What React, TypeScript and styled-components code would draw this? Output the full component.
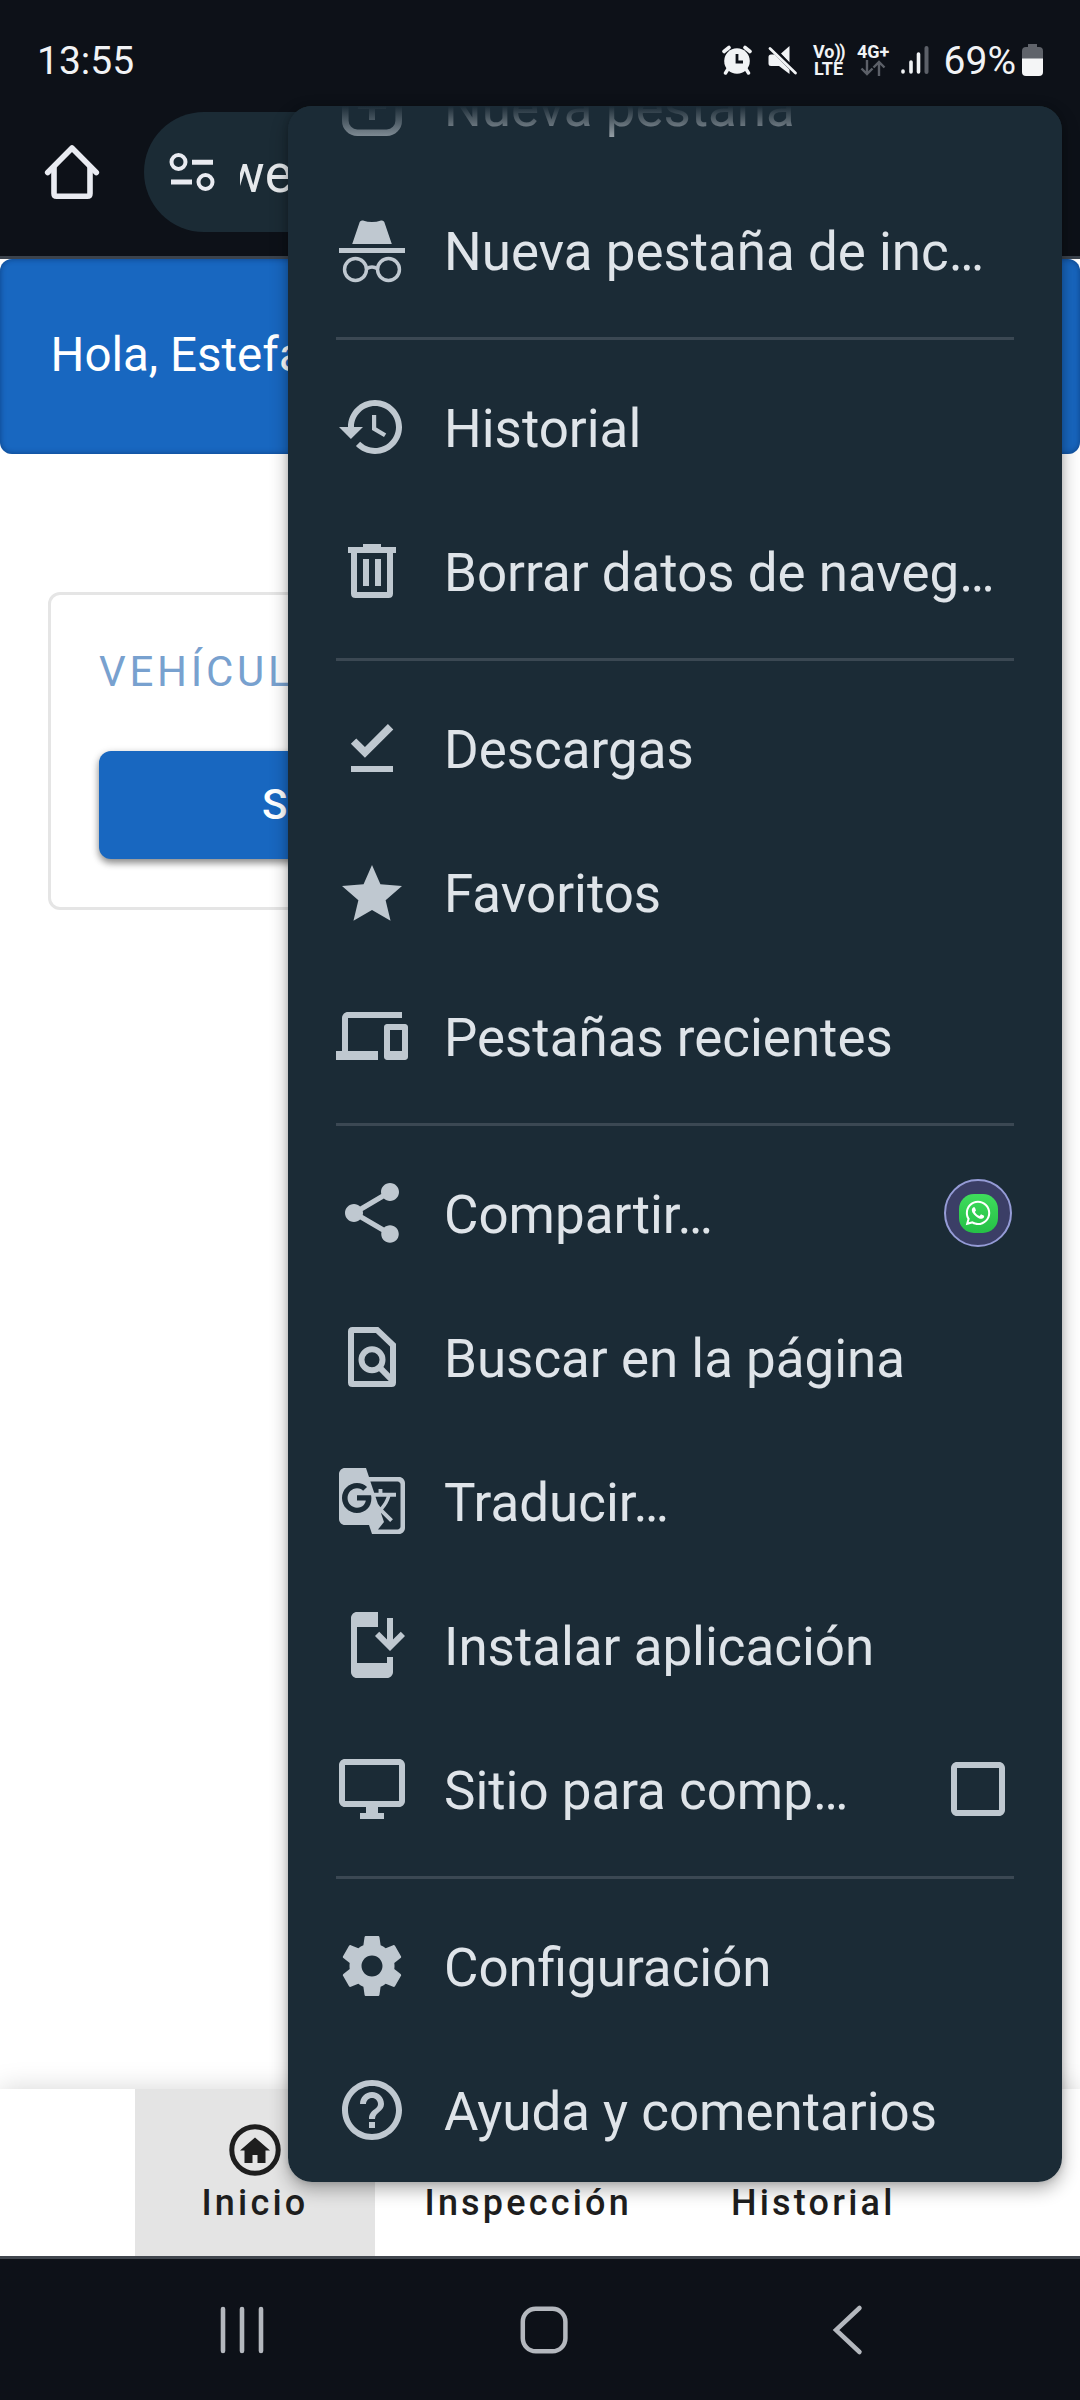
import React from "react";
import styled, { createGlobalStyle } from "styled-components";
import { MdGTranslate, MdInstallMobile, MdHelpOutline, MdCheckBoxOutlineBlank } from "react-icons/md";
import { FaWhatsapp } from "react-icons/fa";

const GlobalStyle = createGlobalStyle`
  *, *::before, *::after { box-sizing: border-box; }
  body { margin: 0; background: #fff; font-family: Roboto, "Noto Sans", sans-serif; }
  svg { display: block; flex: none; }
`;

const Screen = styled.div`
  position: relative;
  display: flex;
  flex-direction: column;
  width: 1080px;
  height: 2400px;
  overflow: hidden;
  background: #fff;
`;

/* ---------- status bar ---------- */
const StatusBar = styled.header`
  display: flex;
  align-items: center;
  justify-content: space-between;
  height: 104px;
  padding: 16px 37px 0 37px;
  background: #0d1118;
  color: #f1f3f5;
`;
const StatusText = styled.span<{ $gap?: number }>`
  font-size: 39px;
  line-height: 46px;
  margin-left: ${(p) => p.$gap ?? 0}px;
  padding-top: 1px;
`;
const StatusIcons = styled.div`
  display: flex;
  align-items: center;
`;
const StatusIcon = styled.span<{ $gap: number }>`
  display: flex;
  margin-left: ${(p) => p.$gap}px;
`;
const Badge = styled.span<{ $w: number; $gap: number }>`
  display: flex;
  flex-direction: column;
  align-items: center;
  width: ${(p) => p.$w}px;
  margin-left: ${(p) => p.$gap}px;
  height: 34px;
  font-size: 18px;
  font-weight: 700;
  line-height: 17px;
  white-space: nowrap;
`;
const Waves = styled.span`
  letter-spacing: -1.5px;
`;

/* ---------- browser toolbar ---------- */
const Toolbar = styled.div`
  display: flex;
  align-items: center;
  height: 155px;
  padding: 8px 144px 24px 36px;
  background: #0d1118;
  border-bottom: 3px solid #3b434d;
`;
const AddressBar = styled.div`
  display: flex;
  align-items: center;
  flex: 1;
  height: 120px;
  margin-left: 36px;
  padding-left: 24px;
  border-radius: 60px;
  background: #1b2b35;
`;
const Address = styled.div`
  width: 60px;
  margin-left: 24px;
  overflow: hidden;
  color: #e6e9ec;
  font-size: 52.8px;
  line-height: 64px;
  padding-top: 4px;
  text-indent: -15px;
`;

/* ---------- web page ---------- */
const Page = styled.main`
  display: flex;
  flex-direction: column;
  flex: 1;
`;
const Greeting = styled.div`
  display: flex;
  align-items: center;
  height: 195px;
  padding: 0 0 3px 50.5px;
  border-radius: 12px;
  background: #1867c0;
  box-shadow: inset 0 0 5px 1px rgba(6, 40, 90, 0.45);
  color: #fff;
  font-size: 47.5px;
`;
const Card = styled.section`
  display: flex;
  flex-direction: column;
  height: 318px;
  margin: 138px 48px 0;
  padding: 52px 48px 0;
  border: 3px solid #e5e5e5;
  border-radius: 12px;
`;
const Overline = styled.div`
  color: #78a1cf;
  font-size: 42px;
  line-height: 50px;
  letter-spacing: 3.75px;
`;
const PrimaryButton = styled.button`
  height: 108px;
  margin-top: 54px;
  padding: 0 0 2px 163px;
  border: 0;
  border-radius: 12px;
  background: #1867c0;
  box-shadow: 0 4px 7px rgba(0, 0, 0, 0.4), 0 2px 10px rgba(0, 0, 0, 0.12);
  color: #fff;
  font: 500 42px Roboto, sans-serif;
  text-align: left;
`;
const Spacer = styled.div`
  flex: 1;
`;
const Tabs = styled.nav`
  display: flex;
  justify-content: center;
  height: 167px;
  background: #fff;
  box-shadow: 0 0 26px rgba(0, 0, 0, 0.17);
`;
const Tab = styled.div<{ $active?: boolean }>`
  display: flex;
  flex-direction: column;
  align-items: center;
  justify-content: flex-end;
  min-width: 240px;
  padding: 0 49.5px 32px;
  background: ${(p) => (p.$active ? "#e4e4e4" : "transparent")};
  color: #1e1e1e;
  font-size: 36px;
  font-weight: 500;
  line-height: 42px;
  letter-spacing: 3.2px;
`;
const TabIcon = styled.span`
  margin-bottom: 6px;
`;

/* ---------- system navigation ---------- */
const SystemNav = styled.footer`
  display: flex;
  align-items: center;
  justify-content: space-between;
  height: 144px;
  padding: 0 203px 0 212px;
  border-top: 3px solid #41464e;
  background: #0d1118;
`;

/* ---------- overflow menu ---------- */
const Menu = styled.div`
  position: absolute;
  left: 288px;
  top: 106px;
  display: flex;
  flex-direction: column;
  justify-content: flex-end;
  width: 774px;
  height: 2076px;
  overflow: hidden;
  border-radius: 24px;
  background: #1b2b36;
  &::before {
    content: "";
    position: absolute;
    inset: 0 0 auto;
    height: 50px;
    background: linear-gradient(#1b2b36, rgba(27, 43, 54, 0));
  }
`;
const MenuShadow = styled.div`
  position: absolute;
  left: 288px;
  top: 106px;
  width: 774px;
  height: 2076px;
  border-radius: 24px;
  box-shadow: 0 7px 18px rgba(0, 0, 0, 0.32), 0 0 6px rgba(0, 0, 0, 0.15);
`;
const MenuRow = styled.div`
  display: flex;
  align-items: center;
  flex: none;
  height: 144px;
  padding: 0 48px;
  color: #bfc8d0;
`;
const MenuLabel = styled.span`
  flex: 1;
  margin-left: 36px;
  padding-top: 3px;
  color: #dfe4e9;
  font-size: 52.9px;
  line-height: 62px;
  white-space: nowrap;
`;
const Divider = styled.div`
  flex: none;
  height: 3px;
  margin: 15px 48px;
  background: #3b4853;
`;
const Trailing = styled.span`
  display: flex;
  align-items: center;
  justify-content: center;
  width: 72px;
`;
const ShareTarget = styled.span`
  display: flex;
  align-items: center;
  justify-content: center;
  width: 68px;
  height: 68px;
  border: 2px solid #959bd6;
  border-radius: 50%;
  background: #3b3e66;
`;
const AppTile = styled.span`
  display: flex;
  align-items: center;
  justify-content: center;
  width: 39px;
  height: 39px;
  border-radius: 15px;
  background: linear-gradient(#3fdc5c, #25c046);
  color: #fff;
`;

const Glyph = ({ d, children }: { d?: string; children?: React.ReactNode }) => (
  <svg width="72" height="72" viewBox="0 0 24 24" fill="currentColor">
    {d ? <path fillRule="evenodd" d={d} /> : children}
  </svg>
);

const paths = {
  history:
    "M13 3c-4.97 0-9 4.03-9 9H1l3.89 3.89.07.14L9 12H6c0-3.87 3.13-7 7-7s7 3.13 7 7-3.13 7-7 7c-1.93 0-3.68-.79-4.94-2.06l-1.42 1.42C8.27 19.99 10.51 21 13 21c4.97 0 9-4.03 9-9s-4.03-9-9-9zm-1 5v5l4 2.37.74-1.23L13.4 12.2V8H12z",
  trash:
    "M9 3h6v1h5v2h-1v13.5q0 1.5-1.5 1.5h-11Q5 21 5 19.5V6H4V4h5zM7 6v13h10V6zM9 8h2v9H9zM13 8h2v9h-2z",
  done: "M17.3 4L19.1 5.8 9.65 15.25 4.95 10.55 6.75 8.8 9.65 11.65zM5 18h14v2H5z",
  star: "M12 18.02L18.18 21.6l-1.64-6.88L22 9.99l-7.19-.61L12 3 9.19 9.38 2 9.99l5.46 4.73L5.82 21.6z",
  devices:
    "M4 6h18V4H4c-1.1 0-2 .9-2 2v11H0v3h14v-3H4V6zm19 2h-6c-.55 0-1 .45-1 1v10c0 .55.45 1 1 1h6c.55 0 1-.45 1-1V9c0-.55-.45-1-1-1zm-1 9h-4v-7h4v7z",
  share:
    "M18 16.08c-.76 0-1.44.3-1.96.77L8.91 12.7c.05-.23.09-.46.09-.7s-.04-.47-.09-.7l7.05-4.11c.54.5 1.25.81 2.04.81 1.66 0 3-1.34 3-3s-1.34-3-3-3-3 1.34-3 3c0 .24.04.47.09.7L8.04 9.81C7.5 9.31 6.79 9 6 9c-1.66 0-3 1.34-3 3s1.34 3 3 3c.79 0 1.5-.31 2.04-.81l7.12 4.16c-.05.21-.08.43-.08.65 0 1.61 1.31 2.92 2.92 2.92s2.92-1.31 2.92-2.92-1.31-2.92-2.92-2.92z",
  monitor:
    "M21 2H3c-1.1 0-2 .9-2 2v12c0 1.1.9 2 2 2h7v2H8v2h8v-2h-2v-2h7c1.1 0 2-.9 2-2V4c0-1.1-.9-2-2-2zm0 14H3V4h18v12z",
  gear:
    "M19.43 12.98c.04-.32.07-.64.07-.98s-.03-.66-.07-.98l2.11-1.65c.19-.15.24-.42.12-.64l-2-3.46c-.12-.22-.39-.3-.61-.22l-2.49 1c-.52-.4-1.08-.73-1.69-.98l-.38-2.65C14.46 2.18 14.25 2 14 2h-4c-.25 0-.46.18-.49.42l-.38 2.65c-.61.25-1.17.59-1.69.98l-2.49-1c-.23-.09-.49 0-.61.22l-2 3.46c-.13.22-.07.49.12.64l2.11 1.65c-.04.32-.07.65-.07.98s.03.66.07.98l-2.11 1.65c-.19.15-.24.42-.12.64l2 3.46c.12.22.39.3.61.22l2.49-1c.52.4 1.08.73 1.69.98l.38 2.65c.03.24.24.42.49.42h4c.25 0 .46-.18.49-.42l.38-2.65c.61-.25 1.17-.59 1.69-.98l2.49 1c.23.09.49 0 .61-.22l2-3.46c.12-.22.07-.49-.12-.64l-2.11-1.65zM12 15.5c-1.93 0-3.5-1.57-3.5-3.5s1.57-3.5 3.5-3.5 3.5 1.57 3.5 3.5-1.57 3.5-3.5 3.5z",
};

const NewTabIcon = () => (
  <Glyph>
    <rect x="3.1" y="3.1" width="17.8" height="17.8" rx="4" fill="none" stroke="currentColor" strokeWidth="2.2" />
    <path d="M11 7.3h2v9.4h-2zM7.3 11h9.4v2H7.3z" />
  </Glyph>
);

const IncognitoIcon = () => (
  <Glyph>
    <path d="M7.9 2.7Q8.2 2 9 2.2Q12 3.2 15 2.2Q15.8 2 16.1 2.7L18.6 10H5.4zM1 11.3h22V13H1z" />
    <g fill="none" stroke="currentColor" strokeWidth="1.15">
      <circle cx="6.5" cy="18.5" r="3.65" />
      <circle cx="17.5" cy="18.5" r="3.65" />
      <path d="M10.1 18.3q1.9-1.3 3.8 0" />
    </g>
  </Glyph>
);

const FindIcon = () => (
  <Glyph>
    <path
      fillRule="evenodd"
      d="M5.5 2H14.1L20 7.6V20.5q0 1.5-1.5 1.5h-13Q4 22 4 20.5v-17Q4 2 5.5 2zM6 4v16h12V8.5L13.3 4z"
    />
    <circle cx="12" cy="12.9" r="3.5" fill="none" stroke="currentColor" strokeWidth="2" />
    <path d="M14.2 15.1L18.7 19.7" stroke="currentColor" strokeWidth="2" />
  </Glyph>
);

const AlarmIcon = () => (
  <svg width="30" height="30" viewBox="0 0 30 30">
    <circle cx="15" cy="16" r="12.8" fill="#f1f3f5" />
    <path d="M2 6.5L7 2.5M28 6.5L23 2.5" stroke="#f1f3f5" strokeWidth="3.6" strokeLinecap="round" />
    <path d="M6 24L3.5 28M24 24L26.5 28" stroke="#f1f3f5" strokeWidth="3.4" strokeLinecap="round" />
    <path d="M15 9v8h6" fill="none" stroke="#0d1118" strokeWidth="2.8" />
  </svg>
);

const MuteIcon = () => (
  <svg width="30" height="30" viewBox="0 0 30 30" fill="#f1f3f5">
    <path d="M21.5 1v16.5L13 8.5zM0.5 12q0-2.5 2.5-2.5h3.5L21.5 24.5V29L11 21H3Q.5 21 .5 18.5z" />
    <path d="M2 3.5L27.5 28" stroke="#f1f3f5" strokeWidth="2.8" strokeLinecap="round" />
    <path d="M6 3.5L24 21" stroke="#0d1118" strokeWidth="1.6" />
  </svg>
);

const SignalIcon = () => (
  <svg width="28" height="30" viewBox="0 0 28 30" strokeWidth="4" strokeLinecap="round" stroke="#f1f3f5">
    <path d="M2 26v1M10 17v10M17.5 9v18" strokeWidth="3.6" />
    <path d="M25.5 3v24" stroke="#5c6068" />
  </svg>
);

const BatteryIcon = () => (
  <svg width="21" height="32" viewBox="0 0 21 32">
    <path d="M6 0h9v3h2q4 0 4 4v8H0V7q0-4 4-4h2z" fill="#5f636a" />
    <path d="M0 14.5h21V28q0 4-4 4H4q-4 0-4-4z" fill="#f4f5f6" />
  </svg>
);

const HomeIcon = () => (
  <svg width="72" height="72" viewBox="0 0 72 72" fill="none" stroke="#e9ebf1" strokeWidth="5.6" strokeLinecap="round" strokeLinejoin="round">
    <path d="M11.7 36.5L36 12l24.3 24.5" />
    <path d="M18 32v25.500q0 2.700 2.700 2.700h30.600q2.700 0 2.700-2.700V32" />
  </svg>
);

const SiteInfoIcon = () => (
  <svg width="48" height="48" viewBox="0 0 48 48" fill="#e9ebf1">
    <g fill="none" stroke="#e9ebf1" strokeWidth="4">
      <circle cx="10.5" cy="14" r="7" />
      <circle cx="37.5" cy="34" r="7" />
    </g>
    <path d="M24 11.7h21v5H24zM3 31.5h21v5H3z" />
  </svg>
);

const HomeCircleIcon = () => (
  <svg width="52" height="52" viewBox="0 0 52 52">
    <circle cx="26" cy="26" r="23.2" fill="none" stroke="#1e1e1e" strokeWidth="5" />
    <path d="M26 13.5L41 26.5h-4.500V39h-8v-8h-5v8h-8V26.5H11z" fill="#1e1e1e" />
  </svg>
);

type Item = { icon: React.ReactNode; label: string; end?: React.ReactNode };

const groups: Item[][] = [
  [
    { icon: <NewTabIcon />, label: "Nueva pestaña" },
    { icon: <IncognitoIcon />, label: "Nueva pestaña de inc…" },
  ],
  [
    { icon: <Glyph d={paths.history} />, label: "Historial" },
    { icon: <Glyph d={paths.trash} />, label: "Borrar datos de naveg…" },
  ],
  [
    { icon: <Glyph d={paths.done} />, label: "Descargas" },
    { icon: <Glyph d={paths.star} />, label: "Favoritos" },
    { icon: <Glyph d={paths.devices} />, label: "Pestañas recientes" },
  ],
  [
    {
      icon: <Glyph d={paths.share} />,
      label: "Compartir…",
      end: (
        <ShareTarget>
          <AppTile>
            <FaWhatsapp size={28} />
          </AppTile>
        </ShareTarget>
      ),
    },
    { icon: <FindIcon />, label: "Buscar en la página" },
    { icon: <MdGTranslate size={72} />, label: "Traducir…" },
    { icon: <MdInstallMobile size={72} />, label: "Instalar aplicación" },
    { icon: <Glyph d={paths.monitor} />, label: "Sitio para comp…", end: <MdCheckBoxOutlineBlank size={72} /> },
  ],
  [
    { icon: <Glyph d={paths.gear} />, label: "Configuración" },
    { icon: <MdHelpOutline size={72} />, label: "Ayuda y comentarios" },
  ],
];

export default function App() {
  return (
    <>
      <GlobalStyle />
      <Screen>
        <StatusBar>
          <StatusText>13:55</StatusText>
          <StatusIcons>
            <StatusIcon $gap={0}><AlarmIcon /></StatusIcon>
            <StatusIcon $gap={16}><MuteIcon /></StatusIcon>
            <Badge $w={31} $gap={15}>
              <span>Vo<Waves>))</Waves></span>
              <span>LTE</span>
            </Badge>
            <Badge $w={32} $gap={13}>
              <span>4G+</span>
              <svg width="26" height="16" viewBox="0 0 26 16" fill="none" stroke="#5c6068" strokeWidth="2.4">
                <path d="M7 0v14M1.5 8.5L7 14l5.5-5.5M19 16V2M13.5 7.5L19 2l5.5 5.5" />
              </svg>
            </Badge>
            <StatusIcon $gap={12}><SignalIcon /></StatusIcon>
            <StatusText $gap={14.5}>69%</StatusText>
            <StatusIcon $gap={6}><BatteryIcon /></StatusIcon>
          </StatusIcons>
        </StatusBar>
        <Toolbar>
          <HomeIcon />
          <AddressBar>
            <SiteInfoIcon />
            <Address>we</Address>
          </AddressBar>
        </Toolbar>
        <Page>
          <Greeting>Hola, Estefa</Greeting>
          <Card>
            <Overline>VEHÍCUL</Overline>
            <PrimaryButton>S</PrimaryButton>
          </Card>
          <Spacer />
          <Tabs>
            <Tab $active>
              <TabIcon><HomeCircleIcon /></TabIcon>
              Inicio
            </Tab>
            <Tab>Inspección</Tab>
            <Tab>Historial</Tab>
          </Tabs>
        </Page>
        <SystemNav>
          <svg width="60" height="60" viewBox="0 0 60 60" stroke="#b4b8be" strokeWidth="4.6" strokeLinecap="round">
            <path d="M11 9v42M30 9v42M49 9v42" />
          </svg>
          <svg width="60" height="60" viewBox="0 0 60 60" fill="none" stroke="#b4b8be" strokeWidth="4.5">
            <rect x="7.8" y="8.7" width="42.6" height="42.6" rx="13" />
          </svg>
          <svg width="60" height="60" viewBox="0 0 60 60" fill="none" stroke="#b4b8be" strokeWidth="4.5" strokeLinecap="round">
            <path d="M42.5 8L19 30l23.5 22" />
          </svg>
        </SystemNav>
        <MenuShadow />
        <Menu>
          {groups.map((group, i) => (
            <React.Fragment key={i}>
              {i > 0 && <Divider />}
              {group.map((item) => (
                <MenuRow key={item.label}>
                  {item.icon}
                  <MenuLabel>{item.label}</MenuLabel>
                  {item.end && <Trailing>{item.end}</Trailing>}
                </MenuRow>
              ))}
            </React.Fragment>
          ))}
        </Menu>
      </Screen>
    </>
  );
}
